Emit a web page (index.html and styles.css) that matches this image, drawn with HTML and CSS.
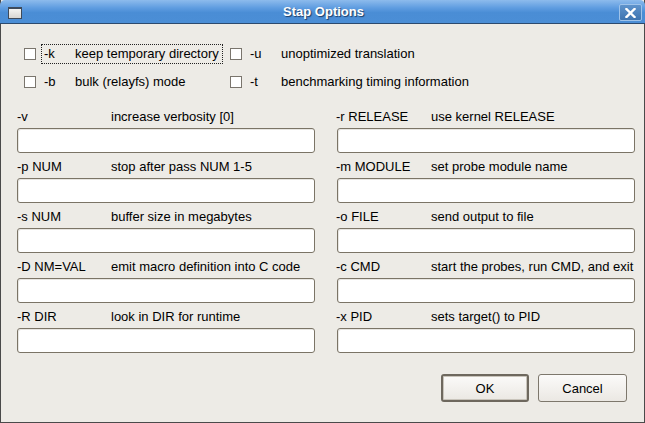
FILE: index.html
```html
<!DOCTYPE html>
<html>
<head>
<meta charset="utf-8">
<link rel="stylesheet" href="styles.css">
</head>
<body>
<div class="window">
  <div class="titlebar">
    <span class="win-icon"></span>
    <span class="title">Stap Options</span>
    <span class="close">
      <svg width="11" height="10" viewBox="0 0 11 10"><path d="M1.5 1 L9.5 9 M9.5 1 L1.5 9" stroke="#fff" stroke-width="2.4" stroke-linecap="square"/></svg>
    </span>
  </div>
  <div class="content">
    <div class="checks">
      <div class="check"><span class="box"></span><span class="clabel focus"><span class="flag">-k</span>keep temporary directory</span></div>
      <div class="check"><span class="box"></span><span class="clabel"><span class="flag">-u</span>unoptimized translation</span></div>
      <div class="check"><span class="box"></span><span class="clabel"><span class="flag">-b</span>bulk (relayfs) mode</span></div>
      <div class="check"><span class="box"></span><span class="clabel"><span class="flag">-t</span>benchmarking timing information</span></div>
    </div>
    <div class="fields">
      <div class="field"><div class="flabel"><span class="fflag">-v</span><span>increase verbosity [0]</span></div><div class="entry"></div></div>
      <div class="field right"><div class="flabel"><span class="fflag">-r RELEASE</span><span>use kernel RELEASE</span></div><div class="entry"></div></div>
      <div class="field"><div class="flabel"><span class="fflag">-p NUM</span><span>stop after pass NUM 1-5</span></div><div class="entry"></div></div>
      <div class="field right"><div class="flabel"><span class="fflag">-m MODULE</span><span>set probe module name</span></div><div class="entry"></div></div>
      <div class="field"><div class="flabel"><span class="fflag">-s NUM</span><span>buffer size in megabytes</span></div><div class="entry"></div></div>
      <div class="field right"><div class="flabel"><span class="fflag">-o FILE</span><span>send output to file</span></div><div class="entry"></div></div>
      <div class="field"><div class="flabel"><span class="fflag">-D NM=VAL</span><span>emit macro definition into C code</span></div><div class="entry"></div></div>
      <div class="field right"><div class="flabel"><span class="fflag">-c CMD</span><span>start the probes, run CMD, and exit</span></div><div class="entry"></div></div>
      <div class="field"><div class="flabel"><span class="fflag">-R DIR</span><span>look in DIR for runtime</span></div><div class="entry"></div></div>
      <div class="field right"><div class="flabel"><span class="fflag">-x PID</span><span>sets target() to PID</span></div><div class="entry"></div></div>
    </div>
    <div class="buttons">
      <button class="btn default">OK</button>
      <button class="btn cancel">Cancel</button>
    </div>
  </div>
</div>
</body>
</html>
```

FILE: styles.css
```css
html, body {
  margin: 0;
  padding: 0;
  background: #edebe6;
}
.window {
  width: 645px;
  height: 423px;
  box-sizing: border-box;
  border: 1px solid #4a4a4a;
  border-top: none;
  background: #edebe6;
  font-family: "Liberation Sans", Arial, sans-serif;
  font-size: 13px;
  color: #000;
  display: flex;
  flex-direction: column;
}
.titlebar {
  height: 23px;
  margin: 0 -1px;
  border-bottom: 1px solid #2c4a6e;
  border-radius: 5px 5px 0 0;
  background: linear-gradient(#8dbbec 0%, #5e9ce0 35%, #4a8dd5 55%, #4b8ed6 100%);
  display: flex;
  align-items: center;
}
.win-icon {
  width: 12px;
  height: 9px;
  margin-left: 8px;
  margin-top: 2px;
  border: 1px solid #3e4a5a;
  border-top-width: 2px;
  background: linear-gradient(#f4f4f2, #d8d6d2);
}
.title {
  flex: 1;
  text-align: center;
  font-weight: bold;
  font-size: 13px;
  color: #fff;
  text-shadow: 1px 1px 1px #1d3d66;
  padding-left: 6px;
}
.close {
  width: 21px;
  height: 15px;
  margin-right: 3px;
  margin-top: 2px;
  border: 1px solid #9ec3ea;
  border-radius: 2px;
  background: linear-gradient(#5e93cc, #3e74b0);
  display: flex;
  align-items: center;
  justify-content: center;
}
.content {
  flex: 1;
  display: flex;
  flex-direction: column;
  padding: 16px 8px 0 16px;
}
.checks {
  display: grid;
  grid-template-columns: 206px auto;
  grid-auto-rows: 28px;
  padding-left: 7px;
}
.check {
  display: flex;
  align-items: center;
}
.box {
  width: 10px;
  height: 10px;
  border: 1px solid #7a756d;
  background: #fff;
  margin-right: 5px;
}
.clabel {
  line-height: 14px;
  padding: 2px 3px 2px 2px;
  border: 1px dotted transparent;
}
.clabel.focus {
  border-color: #222;
}
.flag {
  display: inline-block;
  width: 31px;
}
.fields {
  margin-top: 7px;
  display: grid;
  grid-template-columns: 298px 298px;
  column-gap: 22px;
}
.field {
  display: flex;
  flex-direction: column;
}
.field.right .flabel {
  margin-left: -1px;
}
.flabel {
  height: 25px;
  display: flex;
  align-items: center;
  padding-top: 1px;
  box-sizing: border-box;
}
.fflag {
  width: 94px;
  flex: none;
}
.field.right .fflag {
  width: 95px;
}
.entry {
  height: 25px;
  box-sizing: border-box;
  border: 1px solid #7b7466;
  border-radius: 3px;
  background: #fff;
  box-shadow: inset 1px 1px 0 #e8e6e2;
}
.buttons {
  display: flex;
  justify-content: flex-end;
  gap: 9px;
  margin-top: 21px;
  padding-right: 9px;
}
.btn {
  height: 28px;
  box-sizing: border-box;
  font-family: "Liberation Sans", Arial, sans-serif;
  font-size: 13px;
  color: #000;
  border: 1px solid #7d776c;
  border-radius: 3px;
  background: linear-gradient(#fbfaf9, #ebe8e3);
  padding: 0;
}
.btn.default {
  width: 88px;
  border: 2px solid #6e685e;
  box-shadow: inset 0 0 0 1px #c9c4bb;
}
.btn.cancel {
  width: 89px;
}
```
